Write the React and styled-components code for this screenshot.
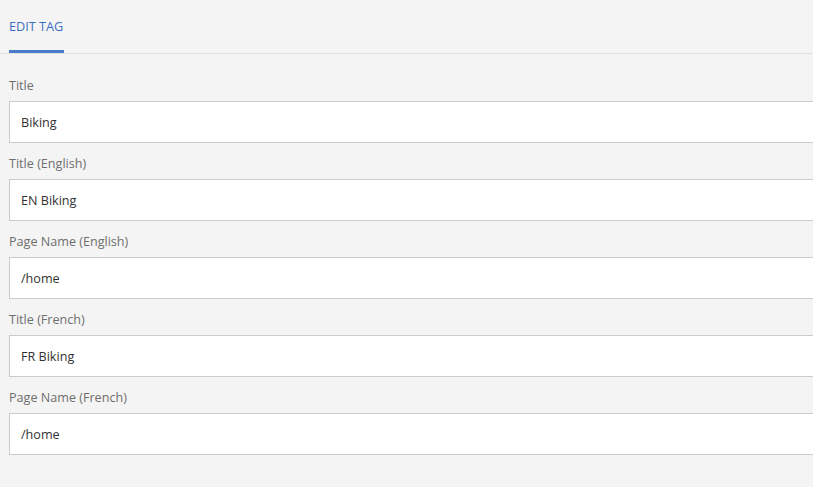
import React from "react";
import styled, { createGlobalStyle } from "styled-components";

const GlobalStyle = createGlobalStyle`
html, body {
  margin: 0;
  padding: 0;
  background: #f4f4f4;
  overflow: hidden;
}
body {
  font-family: "Open Sans", "Noto Sans", sans-serif;
}
`

const Page = styled.div`
width: 100vw;
height: 100vh;
background-color: #f4f4f4;
`

const TabBar = styled.div`
display: flex;
height: 53px;
padding-left: 9px;
border-bottom: 1px solid #e1e1e1;
box-sizing: content-box;
`

const Tab = styled.div`
display: flex;
align-items: center;
height: 53px;
box-sizing: border-box;
padding-top: 1px;
font-size: 12.7px;
color: ${props => props.active ? "#3b6fc1" : "#6e6e6e"};
border-bottom: 3px solid ${props => props.active ? "#4a7bc9" : "transparent"};
margin-bottom: -1px;
width: 55px;
`

const Form = styled.div`
display: flex;
flex-direction: column;
gap: 12px;
padding: 23px 0 0 9px;
`

const Field = styled.div`
display: flex;
flex-direction: column;
`

const Label = styled.label`
font-size: 12.6px;
line-height: 17px;
color: #6e6e6e;
margin-bottom: 7px;
`

const Input = styled.input`
box-sizing: border-box;
height: 42px;
width: calc(100% + 12px);
border: 1px solid #cbcbcb;
border-right: none;
background: #fff;
padding: 0 11px;
font-family: "Open Sans", "Noto Sans", sans-serif;
font-size: 12.6px;
color: #323232;
outline: none;
`

const fields = [
    { label: "Title", value: "Biking" },
    { label: "Title (English)", value: "EN Biking" },
    { label: "Page Name (English)", value: "/home" },
    { label: "Title (French)", value: "FR Biking" },
    { label: "Page Name (French)", value: "/home" },
]

const App = () => {
    return (
        <Page>
            <GlobalStyle />
            <TabBar>
                <Tab active>EDIT TAG</Tab>
            </TabBar>
            <Form>
                {fields.map((f, i) => (
                    <Field key={i}>
                        <Label>{f.label}</Label>
                        <Input defaultValue={f.value} readOnly />
                    </Field>
                ))}
            </Form>
        </Page>
    )
}

export default App
